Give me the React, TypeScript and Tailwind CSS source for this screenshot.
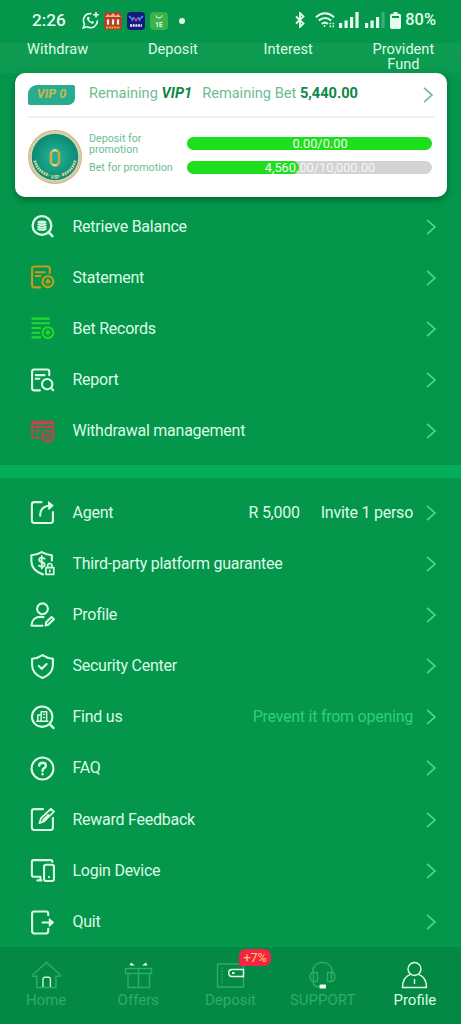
import type { ReactNode, SVGProps } from "react";

type MenuItem = {
  label: string;
  icon: ReactNode;
  extra?: ReactNode;
};

const accountItems: MenuItem[] = [
  { label: "Retrieve Balance", icon: <RetrieveIcon /> },
  { label: "Statement", icon: <StatementIcon /> },
  { label: "Bet Records", icon: <BetRecordsIcon /> },
  { label: "Report", icon: <ReportIcon /> },
  { label: "Withdrawal management", icon: <WithdrawalIcon /> },
];

const serviceItems: MenuItem[] = [
  {
    label: "Agent",
    icon: <AgentIcon />,
    extra: (
      <div className="flex gap-[21px] text-[#dcfbe6]">
        <span>R 5,000</span>
        <span>Invite 1 perso</span>
      </div>
    ),
  },
  { label: "Third-party platform guarantee", icon: <GuaranteeIcon /> },
  { label: "Profile", icon: <ProfileEditIcon /> },
  { label: "Security Center", icon: <SecurityIcon /> },
  {
    label: "Find us",
    icon: <FindUsIcon />,
    extra: <span className="text-[#2ed079]">Prevent it from opening</span>,
  },
  { label: "FAQ", icon: <FaqIcon /> },
  { label: "Reward Feedback", icon: <FeedbackIcon /> },
  { label: "Login Device", icon: <DeviceIcon /> },
  { label: "Quit", icon: <QuitIcon /> },
];

export default function App() {
  return (
    <div className="flex h-[1024px] w-[461px] flex-col overflow-hidden bg-[#04964b] font-['Roboto',sans-serif] text-[#dcfbe6]">
      <StatusBar />
      <div className="grid h-[30px] shrink-0 grid-cols-4 bg-linear-to-b from-[#0f9b52] to-[#0b9a50] text-center text-[14.6px] leading-[15px]">
        <span className="-mt-px">Withdraw</span>
        <span className="-mt-px">Deposit</span>
        <span className="-mt-px">Interest</span>
        <span className="-mt-px px-4">Provident Fund</span>
      </div>
      <VipCard />
      <MenuList items={accountItems} className="pt-1" />
      <div className="mt-2 h-[13px] shrink-0 bg-[#03ae5a]" />
      <MenuList items={serviceItems} className="-mb-4 pt-[9px]" />
      <BottomNav />
    </div>
  );
}

function StatusBar() {
  return (
    <header className="flex h-[43px] shrink-0 items-center pr-[25px] pb-[2px] pl-8 text-[#e4fdec]">
      <span className="w-[50px] text-[17.2px] font-medium">2:26</span>
      <div className="flex items-center gap-[5px]">
        <WhatsAppIcon />
        <SlotAppIcon />
        <NeonAppIcon />
        <svg viewBox="0 0 18 18" className="size-[18px]">
          <rect width="18" height="18" rx="4" fill="#3bb24a" />
          <path d="M5.500 3.500q3.500 5 7 0" fill="none" stroke="#b9efb5" strokeWidth="1.300" />
          <text x="9" y="14.500" textAnchor="middle" fontSize="6.500" fontWeight="700" fill="#e4fdec">
            1E
          </text>
        </svg>
      </div>
      <span className="ml-[11px] size-[6px] rounded-full bg-[#e4fdec]" />
      <div className="ml-auto flex items-center">
        <svg viewBox="0 0 10 16" className="h-4 w-[10px]" fill="none" stroke="currentColor" strokeWidth="1.800">
          <path d="M1 4.500l7.500 7L5 15V1l3.500 3.500-7.500 7" />
        </svg>
        <svg viewBox="0 0 20 16" className="ml-[10px] h-4 w-5" fill="none" stroke="currentColor" strokeWidth="2">
          <path d="M.8 5.200Q10-2.800 19.200 5.200M3.800 8.600q6.200-5.200 12.400 0M6.800 11.900q3.200-2.600 6 0" />
          <circle cx="9.600" cy="14" r="1" fill="currentColor" stroke="none" />
          <path d="M14.500 11.500h1.600M17.500 11.500h1.600M14.500 14.400h1.600M17.500 14.400h1.600" strokeWidth="1.700" />
        </svg>
        <svg viewBox="0 0 20 16" className="ml-[4px] h-4 w-5" fill="currentColor">
          <path d="M0 11h3.200v5H0zM5.500 8.500h3.200V16H5.500zM11 5h3.200v11H11zM16.400 0h3.200v16h-3.200z" />
        </svg>
        <svg viewBox="0 0 20 16" className="ml-[6px] h-4 w-5" fill="currentColor">
          <path d="M0 11h3.200v5H0zM5.500 8.500h3.200V16H5.500zM11 5h3.200v11H11z" />
          <path d="M16.400 0h3.200v16h-3.200z" opacity=".25" />
        </svg>
        <svg viewBox="0 0 11 17" className="ml-[5px] h-[17px] w-[11px]" fill="currentColor">
          <path d="M3.500 0h4v1.800h1.700Q11 1.800 11 3.500v11.800q0 1.700-1.700 1.700H1.700Q0 17 0 15.300V3.500Q0 1.800 1.700 1.800h1.800z" />
          <path d="M2 4h7v2H2z" fill="#04964b" />
        </svg>
        <span className="ml-[4px] text-[16.4px] font-medium">80%</span>
      </div>
    </header>
  );
}

function VipCard() {
  return (
    <section className="mr-[14px] ml-auto flex h-[124px] w-[432px] shrink-0 flex-col rounded-[10px] bg-white px-[13px] shadow-[0_3px_7px_rgba(0,70,30,0.55)]">
      <div className="flex h-[45px] items-center border-b-2 border-[#efefef] text-[14.6px] text-[#6dbd92]">
        <span className="flex h-5 w-[47px] items-center justify-center rounded-tl-[9px] rounded-tr-[2px] rounded-br-[7px] rounded-bl-[2px] bg-[#27ac91] text-[12.5px] font-bold text-[#c9b94e] italic">
          VIP 0
        </span>
        <span className="-mt-px ml-[14px]">
          Remaining <b className="text-[#0c8848] italic">VIP1</b>
        </span>
        <span className="-mt-px ml-[10px]">
          Remaining Bet <b className="text-[#0c8848]">5,440.00</b>
        </span>
        <Chevron className="mt-px mr-px ml-auto h-4 w-[10px] text-[#77bd99]" />
      </div>
      <div className="flex pt-[11px]">
        <Medal />
        <div className="ml-[6px] flex w-[98px] flex-col text-[10.7px] leading-[11px] text-[#6dbd92]">
          <span className="mt-[4px] w-[70px]">Deposit for promotion</span>
          <span className="mt-[7px] whitespace-nowrap">Bet for promotion</span>
        </div>
        <div className="flex w-[245px] flex-col gap-[11px] pt-[8px]">
          <Progress percent={100} label="0.00/0.00" />
          <Progress percent={45.6} label="4,560.00/10,000.00" />
        </div>
      </div>
    </section>
  );
}

function Progress({ percent, label }: { percent: number; label: string }) {
  return (
    <div className="relative h-[13px] rounded-full bg-[#d3d3d3]">
      <div className="h-full rounded-full bg-[#1edf1e]" style={{ width: `${percent}%` }} />
      <span className="absolute inset-x-0 -top-px pl-[21px] text-center text-[12.8px] leading-[16px] text-[#f4f8f3]">
        {label}
      </span>
    </div>
  );
}

function Medal() {
  return (
    <svg viewBox="0 0 54 54" className="-ml-px size-[56px]">
      <defs>
        <radialGradient id="medal">
          <stop offset="0" stopColor="#25b39c" />
          <stop offset="1" stopColor="#0b8a72" />
        </radialGradient>
        <linearGradient id="gold" x2="1">
          <stop offset="0" stopColor="#c9ab48" />
          <stop offset=".5" stopColor="#f7df79" />
          <stop offset="1" stopColor="#c4a23e" />
        </linearGradient>
      </defs>
      <circle cx="27" cy="27" r="25.500" fill="#ddd9b8" stroke="#d3b27a" strokeWidth="1" />
      <circle cx="27" cy="27" r="24" fill="none" stroke="#b9b799" strokeWidth="1" strokeDasharray="1 1" />
      <circle cx="27" cy="27" r="22.500" fill="url(#medal)" />
      <path d="M7.500 30.500q3 11 13.500 14M46.500 30.500q-3 11-13.500 14" fill="none" stroke="#d5d494" strokeWidth="2.800" strokeDasharray="1.800 .7" />
      <text x="27" y="48" textAnchor="middle" fontSize="5.500" fontWeight="700" fill="#e1dba0">
        VIP
      </text>
      <rect x="23" y="20.500" width="8" height="14.500" rx="3.800" fill="none" stroke="url(#gold)" strokeWidth="2.500" />
    </svg>
  );
}

function MenuList({ items, className }: { items: MenuItem[]; className: string }) {
  return (
    <ul className={className}>
      {items.map((item) => (
        <li key={item.label} className="flex h-[51.2px] items-center pr-[25px] pl-[30px] text-[16px] tracking-[-0.25px]">
          {item.icon}
          <span className="ml-[17.5px]">{item.label}</span>
          <div className="ml-auto flex items-center gap-[13px]">
            {item.extra}
            <Chevron className="h-4 w-[10px] text-[#3bdc88]" />
          </div>
        </li>
      ))}
    </ul>
  );
}

function BottomNav() {
  return (
    <nav className="relative mt-auto grid h-[77px] shrink-0 grid-cols-5 bg-[#048944] text-[15px] text-[#2bae67]">
      <NavItem label="Home">
        <path d="M1 13.500L14.500 1.500 28 13.500v1.700h-4V26.500H4.800V15.200H1z" />
        <path d="M11 26V18q0-1.800 1.800-1.800h3.800q1.800 0 1.800 1.800v8" stroke="#c5f3d7" />
      </NavItem>
      <NavItem label="Offers">
        <path d="M1.500 7.500h26v5h-26zM4 12.500h21.500v14H4zM14.500 7.500v19" />
        <path d="M5.500 4.500l1.500-3 4 3zM23.500 4.500l-1.500-3-4 3z" fill="#e4fdec" stroke="none" />
      </NavItem>
      <div className="relative">
        <NavItem label="Deposit">
          <path d="M1.500 3h26v23h-26z" />
          <path d="M6 6.500v16" strokeDasharray="1.500 1.500" />
          <path d="M27.500 8.500H16q-3.300 0-3.300 3.500t3.300 3.500h11.500z" stroke="#e4fdec" />
          <path d="M16 12h2.500" stroke="#e4fdec" strokeWidth="2" />
        </NavItem>
        <span className="absolute top-[2px] left-[55px] rounded-[7px] rounded-bl-none bg-[#f52349] px-[4px] text-[12.5px] leading-[17px] text-[#ffd84b]">
          +7%
        </span>
      </div>
      <NavItem label="SUPPORT">
        <path d="M4.500 11.500Q5 1.500 14.500 1.500t10 10M5 21q1 5 6.500 5.300" />
        <path d="M5.500 11.500h4v9h-4zM19.500 11.500h4v9h-4zM5.500 12H3.500Q.5 16 3.500 20h2M23.500 12h2q3 4 0 8h-2" />
        <rect x="11.500" y="23.500" width="6.500" height="4" rx="1" fill="#f3fff6" stroke="none" />
      </NavItem>
      <NavItem label="Profile" active>
        <circle cx="14.500" cy="8" r="6.500" />
        <path d="M10.500 13.300Q2.500 16 2.500 26.500h24Q26.500 16 18.500 13.300M14.500 18v5" />
      </NavItem>
    </nav>
  );
}

function NavItem({ label, active, children }: { label: string; active?: boolean; children: ReactNode }) {
  return (
    <div className={active ? "flex flex-col items-center pt-[14px] text-[#dcfbe6]" : "flex flex-col items-center pt-[14px]"}>
      <svg viewBox="0 0 29 28" className="h-7 w-[29px]" fill="none" stroke="currentColor" strokeWidth="1.400">
        {children}
      </svg>
      <span className="mt-[2px] leading-[18px]">{label}</span>
    </div>
  );
}

function Chevron(props: SVGProps<SVGSVGElement>) {
  return (
    <svg viewBox="0 0 10 16" fill="none" stroke="currentColor" strokeWidth="1.700" {...props}>
      <path d="M1 .8L9 8l-8 7.200" />
    </svg>
  );
}

function Icon(props: SVGProps<SVGSVGElement>) {
  return (
    <svg
      viewBox="0 0 24 24"
      width="25"
      height="25"
      fill="none"
      stroke="currentColor"
      strokeWidth="2"
      strokeLinecap="round"
      strokeLinejoin="round"
      {...props}
    />
  );
}

function RetrieveIcon() {
  return (
    <Icon>
      <circle cx="11.500" cy="11" r="9" strokeWidth="2.200" />
      <path d="M17.800 17.500l3.700 3.700" strokeWidth="2.400" />
      <ellipse cx="11.500" cy="7.800" rx="4.300" ry="1.500" fill="currentColor" stroke="none" />
      <path d="M7.800 10q3.700 1.500 7.400 0M7.800 12.300q3.700 1.500 7.400 0M7.800 14.500q3.700 1.500 7.400 0" strokeWidth="1.700" />
    </Icon>
  );
}

function StatementIcon() {
  return (
    <Icon className="text-[#c49a20]">
      <path d="M10 21.500H4q-2 0-2-2V3.500q0-2 2-2h13q2 0 2 2V8M5.500 7H14M5.500 10.500H10" />
      <circle cx="17.200" cy="16" r="5.200" />
      <path d="M17.200 12.800l2.800 3.500q-.8 1.700-2.400.6l.4 1.900h-1.600l.4-1.900q-1.600 1.100-2.400-.6z" fill="currentColor" stroke="none" />
    </Icon>
  );
}

function BetRecordsIcon() {
  return (
    <Icon className="text-[#1edb2c]" strokeLinecap="butt">
      <path d="M1.500 2.500h17.500M1.500 7h17.500M1.500 11.500h9M1.500 16h8M1.500 20.500h9" />
      <circle cx="17.200" cy="16" r="5.200" />
      <path d="M17.200 12.800l2.800 3.500q-.8 1.700-2.400.6l.4 1.900h-1.600l.4-1.900q-1.600 1.100-2.400-.6z" fill="currentColor" stroke="none" />
    </Icon>
  );
}

function ReportIcon() {
  return (
    <Icon>
      <path d="M9.500 21.500H4q-2 0-2-2V3.500q0-2 2-2h12.500q2 0 2 2V7M5.500 6.800H14M5.500 10.300H9" />
      <circle cx="16.500" cy="15.500" r="5" />
      <path d="M20.300 19.300l2 2" />
    </Icon>
  );
}

function WithdrawalIcon() {
  return (
    <Icon className="text-[#bd4650]">
      <path d="M10.500 18H4q-2 0-2-2V4q0-1.500 1.500-1.500h17.500q1.500 0 1.500 1.500v7M2 4.300h20M2 7.700h20M9.500 11H5.500M5.500 14h2" strokeWidth="1.800" />
      <circle cx="17.500" cy="16.500" r="5.200" />
      <path d="M17.500 13.800l2.700 2.700-2.700 2.700-2.700-2.700z" strokeWidth="1.200" />
    </Icon>
  );
}

function AgentIcon() {
  return (
    <Icon>
      <path d="M11 2H4Q1.800 2 1.800 4v16q0 2 2.200 2h16q2 0 2-2v-8.500M9.800 15Q9.500 5.800 20 5.300" />
      <path d="M17.700 1.800L22 5.300l-3.800 3.800z" fill="currentColor" strokeWidth="1" />
    </Icon>
  );
}

function GuaranteeIcon() {
  return (
    <Icon>
      <path d="M12.500 22.500Q1.300 18.500 1.300 9.500V4Q7 3.500 11.300 1 15.500 3.500 21 4v5" />
      <path d="M14 7.500q-1-1.400-3-1.200-2.200.2-2.200 2t2.600 2.300 2.700 2.500-2.600 2.200q-2 0-3-1.300M11.300 4.800v12" strokeWidth="1.700" />
      <path d="M15.300 16h7.500v6.500h-7.500zM17 16v-2q0-2 2-2t2 2v2M19 18.500v1.500" strokeWidth="1.600" />
    </Icon>
  );
}

function ProfileEditIcon() {
  return (
    <Icon>
      <circle cx="12" cy="6.500" r="5.200" />
      <path d="M13 14.500q-11-1.500-11.500 8.300h10.500M15 22.600l.5-3.200 5.200-5 2.200 2.200-5.200 5z" />
    </Icon>
  );
}

function SecurityIcon() {
  return (
    <Icon>
      <path d="M12 1q4.500 3 10 3.500v6q0 8.500-10 12.500Q2 19 2 10.500v-6Q7.500 4 12 1zM8.500 11.500l2.700 2.800 4.700-4.700" />
    </Icon>
  );
}

function FindUsIcon() {
  return (
    <Icon>
      <circle cx="11.700" cy="11.200" r="9.800" />
      <path d="M19 18.500l3.500 3.500" strokeWidth="2.400" />
      <path d="M6.500 15.500h10.700M7.500 15.500V9.500h3.200v6M10.700 15.500V6.500h5.300v9M13 9h.8M13 12h.8" strokeWidth="1.400" />
    </Icon>
  );
}

function FaqIcon() {
  return (
    <Icon>
      <circle cx="12" cy="12" r="10.500" />
      <path d="M8.800 9.200Q9 6.500 12 6.500q3.200 0 3.200 2.700 0 1.700-1.700 2.500Q12 12.400 12 14.300M12 17.300v.2" strokeWidth="2.300" />
    </Icon>
  );
}

function FeedbackIcon() {
  return (
    <Icon>
      <path d="M12.500 2H4.200Q1.800 2 1.800 4v16q0 2 2.400 2h15.600q2.200 0 2.200-2V10.500" />
      <path d="M9 15.500l1.500-4.700 9.500-9.100 3 2.800-9.500 9.300zM12.500 12.500l5-5" strokeWidth="1.700" />
    </Icon>
  );
}

function DeviceIcon() {
  return (
    <Icon>
      <path d="M10 18H3.500q-1.700 0-1.700-1.700V3.700Q1.800 2 3.500 2h16.300q1.700 0 1.700 1.700M7 21.500h4M10 18v3.500" />
      <rect x="13.500" y="6.500" width="9.500" height="15.500" rx="1.800" />
      <path d="M18.200 18.300v.2" strokeWidth="2" />
    </Icon>
  );
}

function QuitIcon() {
  return (
    <Icon>
      <path d="M17.500 5V3.500q0-2-2-2H4q-2 0-2 2v17q0 2 2 2h11.500q2 0 2-2V18M12 12h9" />
      <path d="M18.500 8.500l4 3.500-4 3.500z" fill="currentColor" strokeWidth="1" />
    </Icon>
  );
}

function WhatsAppIcon() {
  return (
    <svg viewBox="0 0 17 17" className="size-[17px]" fill="none" stroke="currentColor" strokeWidth="1.600">
      <path d="M9.500 1.700Q3.500 1 1.700 6.500q-.8 3 .8 5.700L1.200 16l4-1.200q4 2 7.500-.5 3-2.500 2.600-6M14 0v5.600M11.200 2.800h5.600" />
      <path d="M5.500 5q-1.500 1.500.8 4.200 3 3.200 5 2.300l.8-1.600-2-1-1 1Q7.500 9 7 7.500l.8-1L6.800 4.800z" fill="currentColor" stroke="none" />
    </svg>
  );
}

function SlotAppIcon() {
  return (
    <svg viewBox="0 0 18 18" className="size-[18px]">
      <rect width="18" height="18" rx="4" fill="#a9442c" />
      <path d="M1 5l3-3 2 2 3-3 3 3 2-2 3 3z" fill="#edb77c" />
      <path d="M2.500 7h3v6h-3zM7.500 7h3v6h-3zM12.500 7h3v6h-3z" fill="#fff0d0" stroke="#c8302a" strokeWidth=".8" />
      <path d="M2 15.500h14" stroke="#dcb42e" strokeWidth="1.800" strokeDasharray="2 .7" />
    </svg>
  );
}

function NeonAppIcon() {
  return (
    <svg viewBox="0 0 18 18" className="size-[18px]">
      <rect width="18" height="18" rx="4" fill="#151a79" />
      <path d="M2 4l3 3M16 4l-3 3M5 9l2-4M13 9l-2-4" stroke="#3f98f5" strokeWidth="1.600" />
      <path d="M9 10L6.800 6.500h4.400z" fill="#e23f9a" />
      <path d="M3 13.500h12" stroke="#e0e8ff" strokeWidth="2.600" strokeDasharray="2 .7" />
    </svg>
  );
}
